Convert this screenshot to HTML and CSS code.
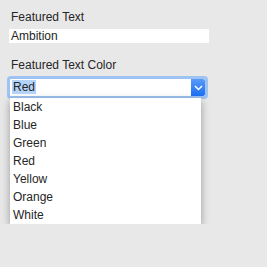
FILE: index.html
```html
<!DOCTYPE html>
<html lang="en">
<head>
<meta charset="UTF-8">
<title>Featured Text</title>
<link rel="stylesheet" href="styles.css">
</head>
<body>
  <div class="panel">
    <div class="field">
      <div class="label">Featured Text</div>
      <div class="text-input">Ambition</div>
    </div>
    <div class="field field-color">
      <div class="label">Featured Text Color</div>
      <div class="select-wrap">
        <div class="select">
          <div class="select-value"><span class="sel">Red</span></div>
          <div class="select-btn">
            <svg width="9" height="6" viewBox="0 0 9 6"><path d="M1 1 L4.5 4.5 L8 1" fill="none" stroke="#fff" stroke-width="1.5"/></svg>
          </div>
        </div>
        <div class="menu">
          <div class="menu-item">Black</div>
          <div class="menu-item">Blue</div>
          <div class="menu-item">Green</div>
          <div class="menu-item">Red</div>
          <div class="menu-item">Yellow</div>
          <div class="menu-item">Orange</div>
          <div class="menu-item">White</div>
        </div>
      </div>
    </div>
  </div>
</body>
</html>
```

FILE: styles.css
```css
body {
  margin: 0;
  background: #e8e8e8;
  font-family: "Liberation Sans", Arial, sans-serif;
  font-size: 12px;
  color: #262626;
}
.panel {
  padding: 10px 0 0 9px;
}
.label {
  line-height: 15px;
  padding-left: 2px;
}
.text-input {
  margin-top: 4px;
  width: 198px;
  height: 14px;
  line-height: 14px;
  padding-left: 2px;
  background: #fff;
}
.field-color {
  margin-top: 15px;
}
.select-wrap {
  margin-top: 3px;
  margin-left: -2px;
  width: 201px;
}
.select {
  display: flex;
  height: 17px;
  border: 3px solid #9ec2f2;
  border-radius: 4px;
  background: #fff;
}
.select-value {
  flex: 1;
  line-height: 17px;
  padding-left: 2px;
}
.sel {
  background: #b4d3f9;
  padding: 0 1px;
}
.select-btn {
  width: 14px;
  display: flex;
  align-items: center;
  justify-content: center;
  background: linear-gradient(#5a9af8, #1b6ff0);
  border-radius: 0 2px 2px 0;
}
.menu {
  margin: -1px 0 0 3px;
  width: 191px;
  background: #fff;
  box-shadow: 0 3px 8px rgba(0,0,0,0.35);
}
.menu-item {
  height: 18px;
  line-height: 18px;
  padding-left: 3px;
}
```
